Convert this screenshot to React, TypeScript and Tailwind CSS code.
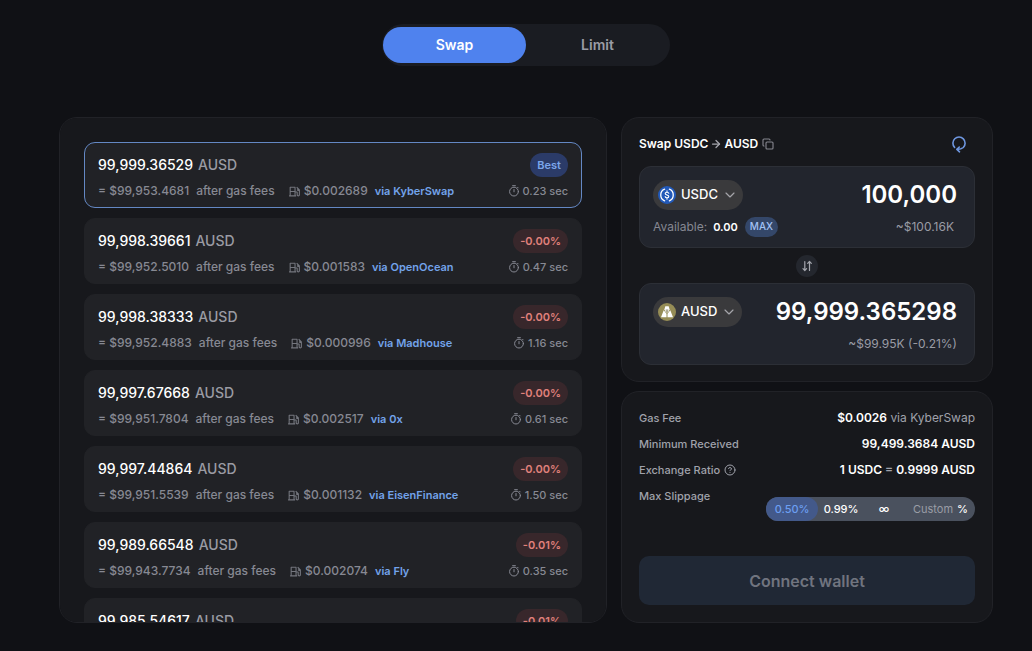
import { useState } from "react";
import { ArrowRight, ChevronDown, CircleHelp, Copy } from "lucide-react";
import { RiGasStationLine } from "react-icons/ri";

type Quote = {
  amount: string;
  net: string;
  gas: string;
  via: string;
  diff: string;
  time: string;
};

const quotes: Quote[] = [
  { amount: "99,999.36529", net: "$99,953.4681", gas: "$0.002689", via: "KyberSwap", diff: "Best", time: "0.23 sec" },
  { amount: "99,998.39661", net: "$99,952.5010", gas: "$0.001583", via: "OpenOcean", diff: "-0.00%", time: "0.47 sec" },
  { amount: "99,998.38333", net: "$99,952.4883", gas: "$0.000996", via: "Madhouse", diff: "-0.00%", time: "1.16 sec" },
  { amount: "99,997.67668", net: "$99,951.7804", gas: "$0.002517", via: "0x", diff: "-0.00%", time: "0.61 sec" },
  { amount: "99,997.44864", net: "$99,951.5539", gas: "$0.001132", via: "EisenFinance", diff: "-0.00%", time: "1.50 sec" },
  { amount: "99,989.66548", net: "$99,943.7734", gas: "$0.002074", via: "Fly", diff: "-0.01%", time: "0.35 sec" },
  { amount: "99,985.54617", net: "$99,939.6513", gas: "$0.001846", via: "Odos", diff: "-0.01%", time: "0.82 sec" },
];

function UsdcIcon() {
  return (
    <svg viewBox="0 0 18 18" className="size-[18px]" aria-hidden="true">
      <circle cx="9" cy="9" r="9" fill="#2259b8" />
      <g fill="none" stroke="#fff" strokeLinecap="round">
        <path d="M6.6 3.2A6.3 6.3 0 0 0 6.6 14.8M11.4 3.2A6.3 6.3 0 0 1 11.4 14.8" strokeWidth="1.3" />
        <path d="M10.8 7.3C10.6 6.5 9.9 6.2 9 6.2C8 6.2 7.2 6.6 7.2 7.5C7.2 9.3 10.8 8.6 10.8 10.5C10.8 11.4 10 11.8 9 11.8C8 11.8 7.3 11.4 7.2 10.6M9 4.8V6.2M9 11.8V13.2" strokeWidth="1.1" />
      </g>
    </svg>
  );
}

function AusdIcon() {
  return (
    <svg viewBox="0 0 18 18" className="size-[18px]" aria-hidden="true">
      <circle cx="9" cy="9" r="9" fill="#968d56" />
      <path d="M7.3 3.3h3.4l.9 3.2-1.2 2.3-1.4 1-1.4-1-1.2-2.3z" fill="#fff" />
      <path d="M5.7 7.2 3 14.2h5.5v-3.4zM12.3 7.2l2.7 7H9.5v-3.4z" fill="#fff" />
      <path d="M9 6v3.2M7.6 7.2 9 8.5l1.4-1.3" fill="none" stroke="#77704a" strokeWidth=".7" />
    </svg>
  );
}

function RefreshIcon() {
  return (
    <svg viewBox="0 0 16 18" className="h-[18px] w-4" fill="none" stroke="currentColor" strokeWidth="1.6" strokeLinecap="round" strokeLinejoin="round" aria-hidden="true">
      <path d="M3.6 12.4A6.1 6.1 0 1 1 12.3 12.5C10.8 13.9 8.8 14.4 6.2 14.4" />
      <path d="M8.3 12 5.9 14.4 8.5 16.8" />
    </svg>
  );
}

function StopwatchIcon() {
  return (
    <svg viewBox="0 0 12 12" className="size-3" fill="none" stroke="currentColor" strokeLinecap="round" aria-hidden="true">
      <circle cx="6" cy="6.6" r="4.4" />
      <path d="M4.6 .7h2.8M6 4.5v2.3M9.6 2.3l.6.6" />
    </svg>
  );
}

function FlipIcon() {
  return (
    <svg viewBox="0 0 12 12" className="size-3" fill="none" stroke="currentColor" strokeWidth="1.2" strokeLinecap="round" strokeLinejoin="round" aria-hidden="true">
      <path d="M3.8 1.5v9M2 8.7l1.8 1.8 1.8-1.8M8.5 10.5v-9M6.7 3.3l1.8-1.8 1.8 1.8" />
    </svg>
  );
}

function QuoteCard({ quote, selected, onSelect }: { quote: Quote; selected: boolean; onSelect: () => void }) {
  return (
    <button
      type="button"
      aria-pressed={selected}
      onClick={onSelect}
      className={`block w-full rounded-[11px] border bg-[#212226] px-[13px] pt-2.5 pb-[7px] text-left ${
        selected ? "border-[#6488c4]" : "border-[#212226]"
      }`}
    >
      <span className="flex h-6 items-center justify-between">
        <span className="flex gap-[5px] text-sm font-medium">
          <span className="text-white">{quote.amount}</span>
          <span className="text-[#9a9ba3]">AUSD</span>
        </span>
        <span
          className={`flex h-6 items-center rounded-full px-[7px] text-[11px] font-semibold ${
            quote.diff === "Best" ? "bg-[#2b3b68] text-[#7ba6ec]" : "bg-[#38272b] text-[#e0817c]"
          }`}
        >
          {quote.diff}
        </span>
      </span>
      <span className="mt-[5px] flex h-[18px] items-center text-xs font-medium text-[#878993]">
        <span>= {quote.net}</span>
        <span className="ml-[7px]">after gas fees</span>
        <RiGasStationLine className="mr-[3px] ml-[13px] size-[13px] text-[#74767e]" />
        <span>{quote.gas}</span>
        <span className="ml-[7px] text-[11px] font-semibold text-[#73a3ea]">via {quote.via}</span>
        <span className="ml-auto flex items-center gap-[3px] text-[11px]">
          <StopwatchIcon />
          {quote.time}
        </span>
      </span>
    </button>
  );
}

function TokenButton({ symbol, icon }: { symbol: string; icon: React.ReactNode }) {
  return (
    <button type="button" className="flex h-[30px] shrink-0 items-center rounded-full bg-[#3a3a3c] px-[5px] text-[13px] font-medium text-white">
      {icon}
      <span className="mr-1 ml-[5px]">{symbol}</span>
      <ChevronDown className="size-4 text-[#a5a5aa]" strokeWidth={1.75} />
    </button>
  );
}

const tokenBox = "rounded-xl border border-[#2c2f36] bg-[#22252d] pt-[13px] pr-[17px] pb-2.5 pl-[13px]";
const panel = "rounded-[18px] border border-[#212227] bg-[#17181c]";
const feeLabel = "flex items-center gap-1 text-[11px] leading-[26px] font-medium";

export default function App() {
  const [tab, setTab] = useState("Swap");
  const [selected, setSelected] = useState(0);
  const [amount, setAmount] = useState("100,000");
  const [slippage, setSlippage] = useState("0.50%");

  return (
    <main className="min-h-screen bg-[#101115] pt-6 pr-[39px] pb-7 pl-[59px] font-['Inter','Liberation_Sans',sans-serif]">
      <nav className="mx-auto flex w-72 rounded-full bg-[#1a1c22] px-px py-[3px]">
        {["Swap", "Limit"].map((name) => (
          <button
            key={name}
            type="button"
            onClick={() => setTab(name)}
            className={`h-9 flex-1 rounded-full text-sm font-semibold ${
              tab === name ? "bg-[#4f82ee] text-white" : "text-[#9a9ca5]"
            }`}
          >
            {name}
          </button>
        ))}
      </nav>

      <div className="mt-[51px] grid grid-cols-[minmax(0,548fr)_minmax(0,372fr)] gap-3.5">
        {/* the quote list scrolls inside whatever height the right column takes */}
        <section className={`h-0 min-h-full overflow-y-auto p-6 [scrollbar-width:none] ${panel}`}>
          <ul className="flex flex-col gap-2.5">
            {quotes.map((quote, i) => (
              <li key={quote.via}>
                <QuoteCard quote={quote} selected={selected === i} onSelect={() => setSelected(i)} />
              </li>
            ))}
          </ul>
        </section>

        <div className="flex flex-col gap-[9px]">
          <section className={`px-[17px] py-4 ${panel}`}>
            <div className="mb-3 flex h-5 items-center justify-between">
              <h2 className="flex items-center gap-0.5 text-xs font-semibold text-white">
                Swap USDC
                <ArrowRight className="size-3 text-[#a5a6ad]" strokeWidth={2.5} />
                AUSD
                <button type="button" aria-label="Copy pair" className="ml-0.5 text-[#85868e]">
                  <Copy className="size-3" strokeWidth={2.25} />
                </button>
              </h2>
              <button type="button" aria-label="Refresh quotes" className="mr-2 text-[#6f97e0]">
                <RefreshIcon />
              </button>
            </div>

            <div className={tokenBox}>
              <div className="flex items-center justify-between gap-4">
                <TokenButton symbol="USDC" icon={<UsdcIcon />} />
                <input
                  aria-label="Amount to swap"
                  value={amount}
                  onChange={(e) => setAmount(e.target.value)}
                  className="h-[30px] w-full min-w-0 bg-transparent text-right text-2xl font-semibold text-white outline-none"
                />
              </div>
              <div className="mt-[7px] flex h-5 items-center text-xs text-[#868892]">
                <span>Available:</span>
                <span className="ml-1.5 text-[11px] font-semibold text-white">0.00</span>
                <button type="button" className="ml-[7px] h-5 rounded-full bg-[#344769] px-[5px] text-[10px] font-medium text-[#a3c2f5]">
                  MAX
                </button>
                <span className="mr-[3px] ml-auto text-[#9a9ca5]">~$100.16K</span>
              </div>
            </div>

            <div className="flex h-[35px] items-center justify-center">
              <button type="button" aria-label="Flip tokens" className="flex size-[22px] items-center justify-center rounded-full bg-[#24272e] text-[#a5a7ae]">
                <FlipIcon />
              </button>
            </div>

            <div className={tokenBox}>
              <div className="flex items-center justify-between gap-4">
                <TokenButton symbol="AUSD" icon={<AusdIcon />} />
                <output className="text-2xl leading-[30px] font-semibold text-white">99,999.365298</output>
              </div>
              <div className="mt-[7px] flex h-5 items-center justify-end text-xs text-[#9a9ca5]">~$99.95K (-0.21%)</div>
            </div>
          </section>

          <section className={`px-[17px] pt-[13px] pb-[17px] text-xs text-[#a0a2ab] ${panel}`}>
            <dl className="leading-[26px]">
              <div className="flex justify-between">
                <dt className={feeLabel}>Gas Fee</dt>
                <dd>
                  <span className="font-semibold text-white">$0.0026</span> via KyberSwap
                </dd>
              </div>
              <div className="flex justify-between">
                <dt className={feeLabel}>Minimum Received</dt>
                <dd className="font-semibold text-white">99,499.3684 AUSD</dd>
              </div>
              <div className="flex justify-between">
                <dt className={feeLabel}>
                  Exchange Ratio <CircleHelp className="size-3" />
                </dt>
                <dd className="font-semibold text-white">
                  1 USDC <span className="text-[#a0a2ab]">=</span> 0.9999 AUSD
                </dd>
              </div>
            </dl>
            <div className="flex items-start justify-between">
              <span className={feeLabel}>Max Slippage</span>
              <div className="mt-3.5 flex h-6 items-center rounded-full bg-[#4a515e] text-[11px] font-medium text-white">
                {["0.50%", "0.99%", "∞"].map((value) => (
                  <button
                    key={value}
                    type="button"
                    onClick={() => setSlippage(value)}
                    className={`h-6 rounded-full ${value === "∞" ? "w-10" : value === "0.99%" ? "w-[46px]" : "w-[52px]"} ${
                      slippage === value ? "bg-[#43598a] text-[#6c9ff2]" : ""
                    }`}
                  >
                    {value}
                  </button>
                ))}
                <label className="flex items-center gap-1 pr-[7px]">
                  <input
                    aria-label="Custom slippage"
                    placeholder="Custom"
                    className="w-[49px] bg-transparent text-right font-normal outline-none placeholder:text-[#9a9da6]"
                  />
                  %
                </label>
              </div>
            </div>
            <button type="button" className="mt-[35px] h-[49px] w-full rounded-[10px] bg-[#202835] text-base font-semibold text-[#70747f]">
              Connect wallet
            </button>
          </section>
        </div>
      </div>
    </main>
  );
}
